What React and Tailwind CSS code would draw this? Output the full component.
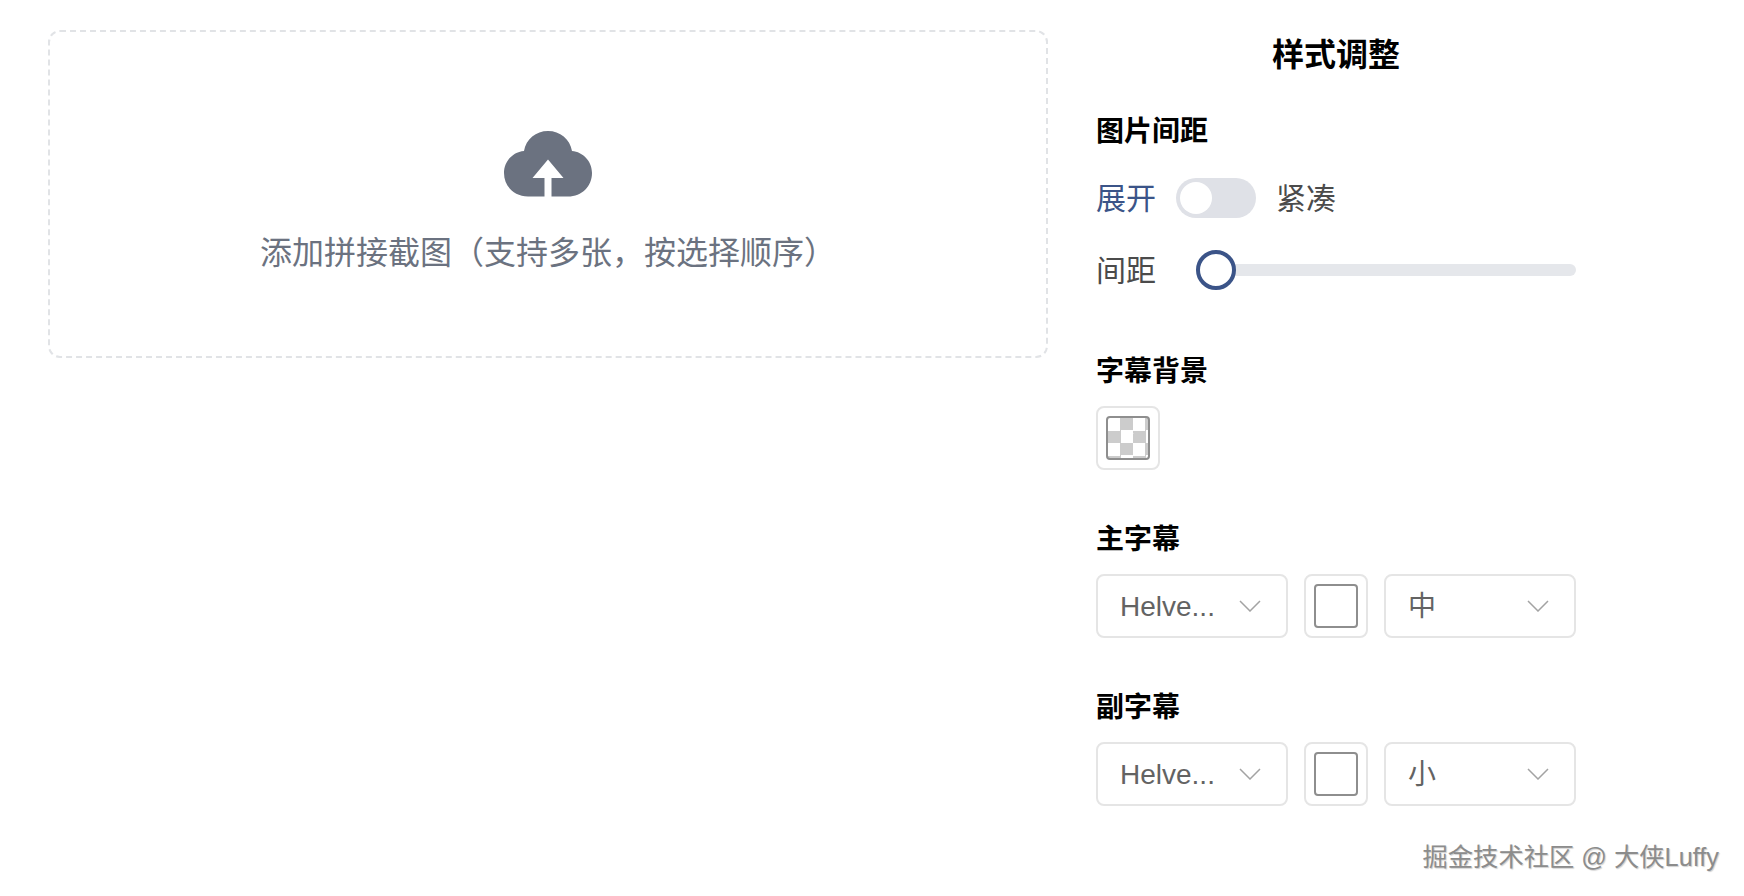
const cjk = "font-['Liberation_Sans','Noto_Sans_CJK_SC',sans-serif]";

function Chevron() {
  return (
    <svg width="22" height="12" viewBox="0 0 22 12" fill="none" className="shrink-0">
      <path d="M1 1L11 11L21 1" stroke="#a3a3a3" strokeWidth="1.5" />
    </svg>
  );
}

function Heading({ children, className = "" }) {
  return <div className={"text-[28px] leading-[40px] font-bold text-black " + className}>{children}</div>;
}

function Swatch({ checker }) {
  return (
    <div className="w-16 h-16 shrink-0 flex items-center justify-center rounded-lg border-2 border-[#e5e5e5] bg-white">
      {checker ? (
        <div className="relative w-11 h-11 rounded border-2 border-[#8e8e8e] bg-[repeating-conic-gradient(#cccccc_0_25%,#ffffff_0_50%)] bg-[length:25px_25px]">
          <svg className="absolute left-[12px] top-[12px]" width="16" height="16" viewBox="0 0 16 16" fill="none">
            <path d="M4 9L6.5 11L13 3" stroke="#ffffff" strokeWidth="1.3" />
          </svg>
        </div>
      ) : (
        <div className="w-11 h-11 rounded border-2 border-[#8e8e8e] bg-white" />
      )}
    </div>
  );
}

function Select({ value }) {
  return (
    <div className="w-48 h-16 shrink-0 flex items-center justify-between pl-[22px] pr-[25px] rounded-lg border-2 border-[#e5e5e5] bg-white text-[28px] text-[#636363]">
      <span className="relative top-px">{value}</span>
      <Chevron />
    </div>
  );
}

function FontRow({ size }) {
  return (
    <div className="flex gap-4">
      <Select value="Helve..." />
      <Swatch />
      <Select value={size} />
    </div>
  );
}

export default function App() {
  return (
    <div className={"relative w-[1744px] h-[896px] overflow-hidden bg-white flex items-start gap-12 pl-12 pt-[30px] " + cjk}>
      <div className="w-[1000px] h-[328px] shrink-0 flex flex-col items-center pt-[99px] rounded-xl border-2 border-dashed border-[#e1e3e6]">
        <svg width="88" height="66" viewBox="0 0 88 66" className="block">
          <path d="M24 65.5C10 65.5 0 55 0 42C0 30 9 21 20 20C22 8 32 0 44 0C56 0 66 8 68 20C79 21 88 30 88 42C88 55 78 65.5 64 65.5Z" fill="#6b7280" />
          <path d="M44 28.5L59.5 47H47.5V66H40.5V47H28.5Z" fill="#ffffff" />
        </svg>
        <div className="mt-8 text-[32px] leading-[48px] text-[#6b7280]">添加拼接截图（支持多张，按选择顺序）</div>
      </div>

      <div className="w-[480px] shrink-0">
        <div className="mt-px text-[32px] leading-[48px] font-bold text-black text-center">样式调整</div>

        <Heading className="mt-[33px]">图片间距</Heading>
        <div className="mt-[26px] flex items-center h-10 text-[30px] text-[#4b4b4b]">
          <span className="text-[#3b5488]">展开</span>
          <div className="ml-5 w-20 h-10 rounded-full bg-[#dfe1e7] p-1">
            <div className="w-8 h-8 rounded-full bg-white" />
          </div>
          <span className="ml-5">紧凑</span>
        </div>
        <div className="mt-8 flex items-center h-10 text-[30px] text-[#4b4b4b]">
          <span>间距</span>
          <div className="relative ml-10 flex-1 h-3 rounded-full bg-[#e5e7eb]">
            <div className="absolute left-0 top-[-14px] w-10 h-10 rounded-full border-4 border-[#3b5488] bg-white" />
          </div>
        </div>

        <Heading className="mt-[62px]">字幕背景</Heading>
        <div className="mt-[14px]">
          <Swatch checker />
        </div>

        <Heading className="mt-[50px]">主字幕</Heading>
        <div className="mt-[14px]">
          <FontRow size="中" />
        </div>

        <Heading className="mt-[50px]">副字幕</Heading>
        <div className="mt-[14px]">
          <FontRow size="小" />
        </div>
      </div>

      <div className="absolute right-[25px] top-[839px] text-[25.3px] leading-[36px] whitespace-nowrap text-[#8c8c8c] [text-shadow:1px_1px_1px_#d0d0d0]">
        掘金技术社区 @ 大侠Luffy
      </div>
    </div>
  );
}
